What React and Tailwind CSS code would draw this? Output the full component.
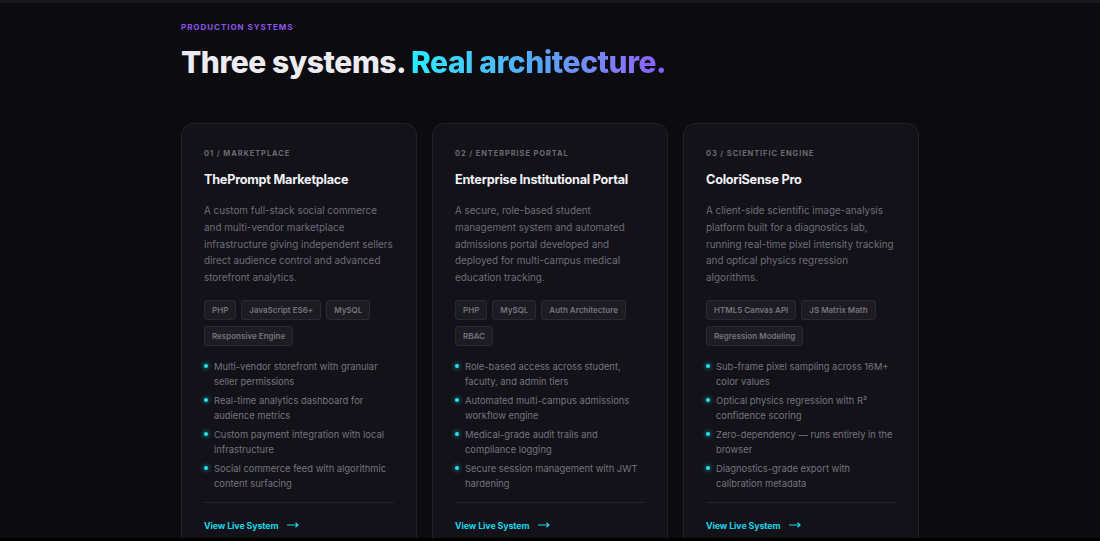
import React from 'react';

const systems = [
  {
    label: '01 / MARKETPLACE',
    title: 'ThePrompt Marketplace',
    description:
      'A custom full-stack social commerce and multi-vendor marketplace infrastructure giving independent sellers direct audience control and advanced storefront analytics.',
    tags: ['PHP', 'JavaScript ES6+', 'MySQL', 'Responsive Engine'],
    points: [
      'Multi-vendor storefront with granular seller permissions',
      'Real-time analytics dashboard for audience metrics',
      'Custom payment integration with local infrastructure',
      'Social commerce feed with algorithmic content surfacing',
    ],
  },
  {
    label: '02 / ENTERPRISE PORTAL',
    title: 'Enterprise Institutional Portal',
    description:
      'A secure, role-based student management system and automated admissions portal developed and deployed for multi-campus medical education tracking.',
    tags: ['PHP', 'MySQL', 'Auth Architecture', 'RBAC'],
    points: [
      'Role-based access across student, faculty, and admin tiers',
      'Automated multi-campus admissions workflow engine',
      'Medical-grade audit trails and compliance logging',
      'Secure session management with JWT hardening',
    ],
  },
  {
    label: '03 / SCIENTIFIC ENGINE',
    title: 'ColoriSense Pro',
    description:
      'A client-side scientific image-analysis platform built for a diagnostics lab, running real-time pixel intensity tracking and optical physics regression algorithms.',
    tags: ['HTML5 Canvas API', 'JS Matrix Math', 'Regression Modeling'],
    points: [
      'Sub-frame pixel sampling across 16M+ color values',
      'Optical physics regression with R² confidence scoring',
      'Zero-dependency — runs entirely in the browser',
      'Diagnostics-grade export with calibration metadata',
    ],
  },
];

function SystemCard({ system }) {
  return (
    <div className="flex flex-col rounded-[12px] border border-[#232229] bg-[#131218] pl-[22px] pr-[21px] pt-[24px] pb-[24px]">
      <span className="text-[7.5px] font-bold tracking-[0.12em] text-[#6a6973]">{system.label}</span>
      <h3 className="mt-[12px] text-[12.7px] font-bold tracking-[-0.02em] leading-[18px] text-[#f2f1f6]">
        {system.title}
      </h3>

      <p className="mt-[13px] text-[9.9px] leading-[16.7px] text-[#6e6d78]">{system.description}</p>

      <div className="mt-[14px] flex flex-wrap gap-x-[5px] gap-y-[6px]">
        {system.tags.map((tag) => (
          <span
            key={tag}
            className="h-[20px] rounded-[3px] border border-[#2b2a32] bg-[#1d1c22] px-[7px] text-[8px] font-semibold leading-[18px] text-[#74737d]"
          >
            {tag}
          </span>
        ))}
      </div>

      <ul className="mt-[13px] flex flex-col gap-[4px]">
        {system.points.map((point) => (
          <li key={point} className="flex items-start gap-[6px]">
            <span className="mt-[5.5px] h-[4px] w-[4px] shrink-0 rounded-full bg-[#22e3f0] shadow-[0_0_5px_#22d3ee]" />
            <span className="text-[9.4px] leading-[15px] text-[#75747f]">{point}</span>
          </li>
        ))}
      </ul>

      <div className="mt-[11px] mr-[1px] border-t border-[#24232a] pt-[16px]">
        <a className="flex items-center gap-[9px] text-[8.8px] font-bold tracking-[-0.01em] text-[#1fd5ea]">
          View Live System
          <svg width="12" height="6" viewBox="0 0 12 6" fill="none">
            <path d="M0 3h11M8.5 0.7 11 3 8.5 5.3" stroke="#1fd5ea" strokeWidth="1.2" />
          </svg>
        </a>
      </div>
    </div>
  );
}

export default function App() {
  return (
    <div
      className="h-[541px] overflow-hidden border-t-[3px] border-b-[3px] border-t-[#19181e] border-b-black bg-[#0c0b10]"
      style={{ fontFamily: 'Inter, "Noto Sans", sans-serif' }}
    >
      <section className="mx-auto w-[738px] pt-[9px]">
        <span className="text-[8px] font-bold tracking-[0.12em] text-[#8b55e8]">PRODUCTION SYSTEMS</span>
        <h2 className="mt-[6px] text-[30px] font-extrabold leading-[40px] tracking-[-0.015em] text-[#ecebf1]">
          Three systems.{' '}
          <span className="bg-gradient-to-r from-[#22ecff] via-[#55a6f5] to-[#8b5cf6] bg-clip-text text-transparent">
            Real architecture.
          </span>
        </h2>

        <div className="mt-[41px] grid grid-cols-3 gap-[15px]">
          {systems.map((system) => (
            <SystemCard key={system.label} system={system} />
          ))}
        </div>
      </section>
    </div>
  );
}
